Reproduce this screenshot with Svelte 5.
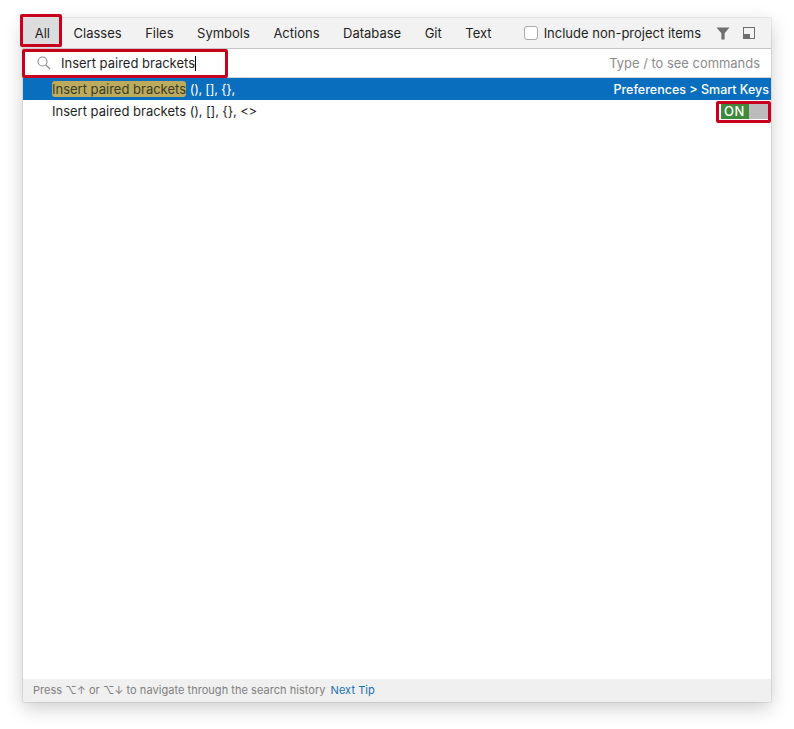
<script lang="ts">
	const tabs = ['All', 'Classes', 'Files', 'Symbols', 'Actions', 'Database', 'Git', 'Text'];
</script>

<div class="page">
	<div class="window">
		<header class="tabs">
			{#each tabs as tab, i}
				<span class="tab" class:active={i === 0}>{tab}</span>
			{/each}
			<label class="include">
				<span class="checkbox"></span>
				Include non-project items
			</label>
			<svg class="icon filter" width="14" height="13" viewBox="0 0 14 13">
				<path d="M0.5 0.5H13.5L8.6 6.2V12.5H5.4V6.2Z" fill="#6e6e6e" />
			</svg>
			<svg class="icon dock" width="12" height="12" viewBox="0 0 12 12">
				<rect x="0.5" y="0.5" width="11" height="11" fill="none" stroke="#6e6e6e" />
				<rect x="1" y="7" width="6" height="4" fill="#6e6e6e" />
			</svg>
			<div class="mark mark-all"></div>
		</header>

		<div class="search">
			<svg class="search-icon" width="14" height="14" viewBox="0 0 14 14">
				<circle cx="5.5" cy="5.5" r="4.5" fill="none" stroke="#8c8c8c" stroke-width="1.1" />
				<path d="M9 9L13 13" stroke="#8c8c8c" stroke-width="1.3" />
			</svg>
			<span class="query">Insert paired brackets</span>
			<span class="caret"></span>
			<span class="hint">Type / to see commands</span>
			<div class="mark mark-search"></div>
		</div>

		<div class="results">
			<div class="row selected">
				<span class="name"><span class="hit">Insert paired brackets</span> <span class="args">(), [], {'{}'},</span></span>
				<span class="path">Preferences &gt; Smart Keys</span>
			</div>
			<div class="row">
				<span class="name">Insert paired brackets <span class="args">(), [], {'{}'}, &lt;&gt;</span></span>
				<span class="toggle"><span class="on">ON</span></span>
				<div class="mark mark-toggle"></div>
			</div>
		</div>

		<footer class="footer">
			<span class="press">Press ⌥↑ or ⌥↓ to navigate through the search history</span>
			<span class="tip">Next Tip</span>
		</footer>
	</div>
</div>

<style>
	:global(body) {
		margin: 0;
		background: #fff;
	}

	.page {
		box-sizing: border-box;
		height: 729px;
		padding: 18px 23px 27px;
		overflow: hidden;
	}

	.window {
		position: relative;
		box-sizing: border-box;
		display: flex;
		flex-direction: column;
		width: 748px;
		height: 684px;
		background: #fff;
		font-family: Inter, 'Liberation Sans', sans-serif;
		font-size: 13px;
		color: #1f1f1f;
		box-shadow: 0 0 1px rgba(0, 0, 0, 0.45), 0 6px 18px rgba(0, 0, 0, 0.2);
	}

	.tabs {
		position: relative;
		display: flex;
		align-items: center;
		height: 30px;
		flex: none;
		background: #f2f2f2;
		border-bottom: 1px solid #c6c6c6;
	}

	.tab {
		padding: 0 11.75px;
		line-height: 30px;
	}

	.tab.active {
		background: #dcdcdc;
	}

	.include {
		display: flex;
		align-items: center;
		gap: 6px;
		margin-left: auto;
	}

	.checkbox {
		box-sizing: border-box;
		width: 14px;
		height: 14px;
		background: #fff;
		border: 1px solid #a8a8a8;
		border-radius: 3px;
	}

	.filter {
		margin-left: 15px;
	}

	.dock {
		margin: 0 16px 0 13px;
	}

	.search {
		position: relative;
		display: flex;
		align-items: center;
		height: 29px;
		flex: none;
		padding: 0 11px 0 14px;
		border-bottom: 1px solid #d4d4d4;
		box-sizing: border-box;
	}

	.query {
		margin-left: 10px;
	}

	.caret {
		width: 1px;
		height: 15px;
		background: #000;
	}

	.hint {
		margin-left: auto;
		color: #8c8c8c;
		font-size: 12.95px;
	}

	.results {
		flex: 1;
	}

	.row {
		position: relative;
		display: flex;
		align-items: center;
		justify-content: space-between;
		height: 22px;
		padding: 0 2px 0 29px;
	}

	.row.selected {
		background: #0a6ebf;
		color: #fff;
	}

	.hit {
		background: #bcab5c;
		color: #3b3b2a;
		border-radius: 3px;
	}

	.args {
		letter-spacing: -0.15px;
	}

	.selected .args {
		letter-spacing: -0.3px;
	}

	.path {
		font-size: 12.5px;
		font-weight: 500;
	}

	.toggle {
		display: flex;
		width: 47px;
		height: 16px;
		margin-right: 1px;
		background: #bcbcbc;
	}

	.on {
		box-sizing: border-box;
		width: 28px;
		padding-left: 3px;
		background: #3f8a3c;
		color: #fff;
		font-size: 13px;
		font-weight: 500;
		letter-spacing: 0.6px;
		line-height: 16px;
	}

	.footer {
		display: flex;
		align-items: center;
		gap: 5px;
		height: 23px;
		flex: none;
		padding: 0 10px 1px;
		box-sizing: border-box;
		background: #f0f0f0;
		color: #808080;
		font-size: 11px;
	}

	.press {
		letter-spacing: 0.04px;
	}

	.tip {
		color: #1a6fb0;
		letter-spacing: 0.05px;
	}

	/* red annotation boxes drawn on top of the screenshot */
	.mark {
		position: absolute;
		box-sizing: border-box;
		border: 3px solid #c8001e;
		border-radius: 2px;
		pointer-events: none;
	}

	.mark-all {
		left: -3px;
		top: -4px;
		width: 42px;
		height: 33px;
	}

	.mark-search {
		left: -1px;
		top: 0;
		width: 206px;
		height: 29px;
	}

	.mark-toggle {
		right: 0;
		top: 1px;
		width: 55px;
		height: 22px;
	}
</style>
